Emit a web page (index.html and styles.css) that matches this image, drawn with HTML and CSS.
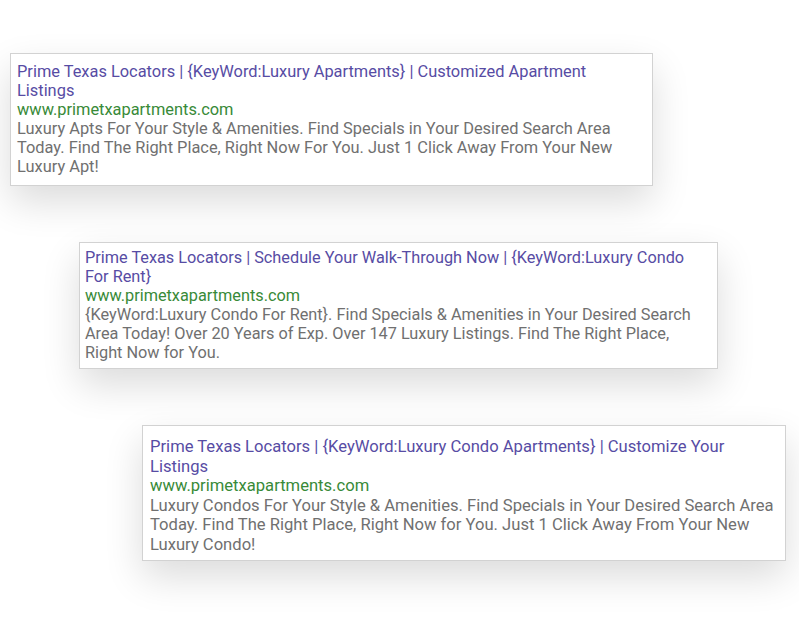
FILE: index.html
```html
<!DOCTYPE html>
<html>
<head>
<meta charset="utf-8">
<link rel="stylesheet" href="styles.css">
</head>
<body>
<main class="stack">
  <section class="ad ad-one">
    <div class="title">Prime Texas Locators | {KeyWord:Luxury Apartments} | Customized Apartment<br>Listings</div>
    <div class="url">www.primetxapartments.com</div>
    <div class="desc">Luxury Apts For Your Style &amp; Amenities. Find Specials in Your Desired Search Area<br>Today. Find The Right Place, Right Now For You. Just 1 Click Away From Your New<br>Luxury Apt!</div>
  </section>
  <section class="ad ad-two">
    <div class="title">Prime Texas Locators | Schedule Your Walk-Through Now | {KeyWord:Luxury Condo<br>For Rent}</div>
    <div class="url">www.primetxapartments.com</div>
    <div class="desc">{KeyWord:Luxury Condo For Rent}. Find Specials &amp; Amenities in Your Desired Search<br>Area Today! Over 20 Years of Exp. Over 147 Luxury Listings. Find The Right Place,<br>Right Now for You.</div>
  </section>
  <section class="ad ad-three">
    <div class="title">Prime Texas Locators | {KeyWord:Luxury Condo Apartments} | Customize Your<br>Listings</div>
    <div class="url">www.primetxapartments.com</div>
    <div class="desc">Luxury Condos For Your Style &amp; Amenities. Find Specials in Your Desired Search Area<br>Today. Find The Right Place, Right Now for You. Just 1 Click Away From Your New<br>Luxury Condo!</div>
  </section>
</main>
</body>
</html>
```
FILE: styles.css
```css
html, body {
  margin: 0;
  padding: 0;
  background: #ffffff;
}
body {
  width: 799px;
  height: 638px;
  overflow: hidden;
  font-family: Roboto, "Liberation Sans", sans-serif;
  font-size: 16.3px;
  line-height: 19px;
}
.stack {
  display: flex;
  flex-direction: column;
  align-items: flex-start;
  padding-top: 53px;
  gap: 56px;
}
.ad {
  box-sizing: border-box;
  background: #ffffff;
  border: 1px solid #d2d2d2;
  box-shadow: 0 16px 36px rgba(0, 0, 0, 0.14);
  padding: 8px 6px 10px 6px;
}
.ad-one {
  margin-left: 10px;
  width: 643px;
  height: 133px;
  font-size: 16.4px;
}
.ad-two {
  margin-left: 79px;
  width: 639px;
  height: 127px;
  padding-top: 5px;
  padding-left: 5px;
}
.ad-three {
  margin-left: 142px;
  width: 644px;
  height: 136px;
  padding-top: 11px;
  padding-left: 7px;
  font-size: 16.6px;
  line-height: 19.5px;
}
.title {
  color: #574ca4;
}
.url {
  color: #388a38;
}
.desc {
  color: #707070;
}
```
